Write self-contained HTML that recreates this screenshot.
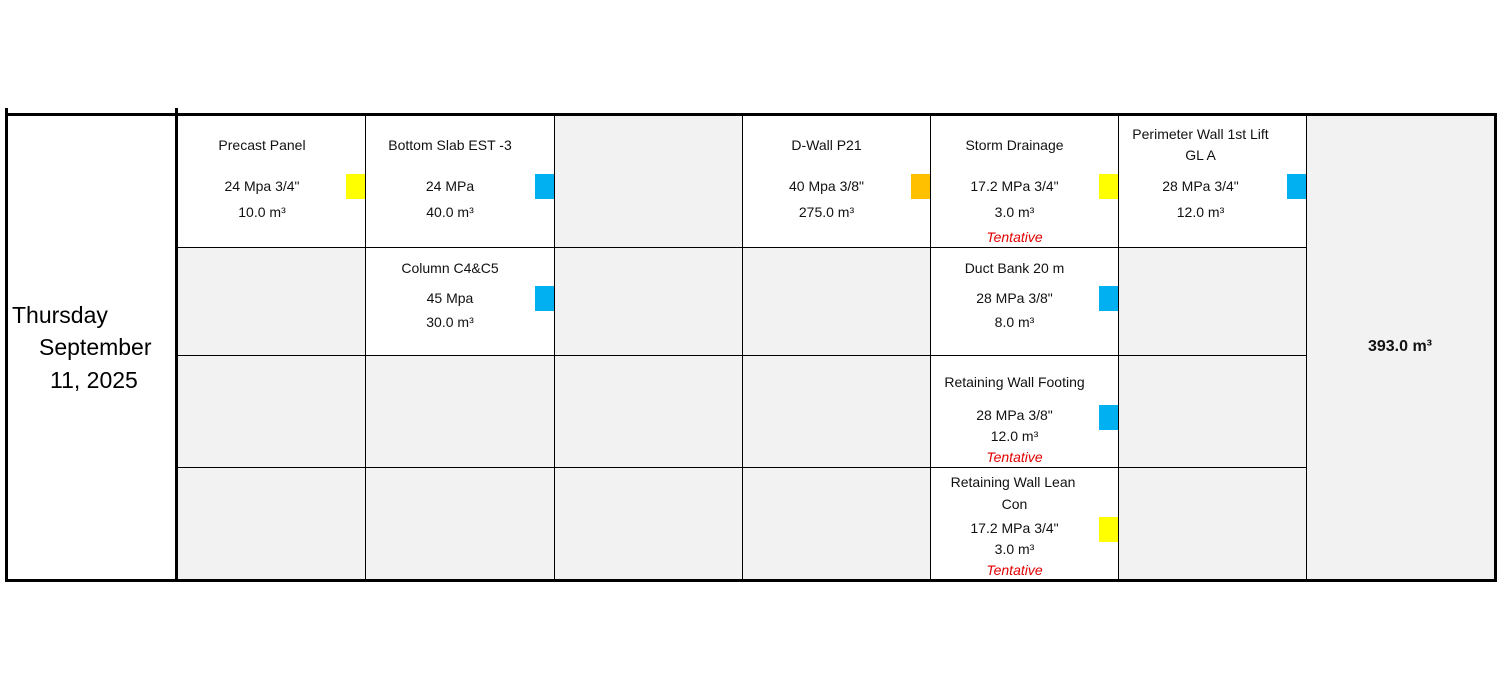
<!DOCTYPE html>
<html><head><style>
body{margin:0;width:1500px;height:700px;background:#fff;position:relative;font-family:"Liberation Sans",sans-serif;overflow:hidden}
.a{position:absolute}
.t{position:absolute;text-align:center;font-size:14px;line-height:16px;color:#111;white-space:nowrap}
.r{color:#e00000;font-style:italic}
.sq{position:absolute;width:19px;height:25px}
</style></head><body>
<div class="a" style="left:177px;top:116px;width:1318px;height:464px;background:#f2f2f2"></div>
<div class="a" style="left:8px;top:116px;width:169px;height:464px;background:#fff"></div>
<div class="a" style="left:177px;top:116px;width:377px;height:131px;background:#fff"></div>
<div class="a" style="left:742px;top:116px;width:564px;height:131px;background:#fff"></div>
<div class="a" style="left:365px;top:247px;width:189px;height:108px;background:#fff"></div>
<div class="a" style="left:930px;top:247px;width:188px;height:333px;background:#fff"></div>
<div class="a" style="left:365px;top:116px;width:1px;height:464px;background:#000"></div>
<div class="a" style="left:554px;top:116px;width:1px;height:464px;background:#000"></div>
<div class="a" style="left:742px;top:116px;width:1px;height:464px;background:#000"></div>
<div class="a" style="left:930px;top:116px;width:1px;height:464px;background:#000"></div>
<div class="a" style="left:1118px;top:116px;width:1px;height:464px;background:#000"></div>
<div class="a" style="left:1306px;top:116px;width:1px;height:464px;background:#000"></div>
<div class="a" style="left:177px;top:247px;width:1129px;height:1px;background:#000"></div>
<div class="a" style="left:177px;top:355px;width:1129px;height:1px;background:#000"></div>
<div class="a" style="left:177px;top:467px;width:1129px;height:1px;background:#000"></div>
<div class="a" style="left:5px;top:113px;width:1492px;height:3px;background:#000"></div>
<div class="a" style="left:5px;top:579px;width:1492px;height:3px;background:#000"></div>
<div class="a" style="left:5px;top:108px;width:3px;height:474px;background:#000"></div>
<div class="a" style="left:175px;top:108px;width:3px;height:474px;background:#000"></div>
<div class="a" style="left:1494px;top:113px;width:3px;height:469px;background:#000"></div>
<div class="a" style="left:12px;top:302px;font-size:23px;line-height:26px">Thursday</div>
<div class="a" style="left:39px;top:334px;font-size:23px;line-height:26px">September</div>
<div class="a" style="left:50px;top:367px;font-size:23px;line-height:26px">11, 2025</div>
<div class="sq" style="left:346px;top:174px;background:#ffff00"></div>
<div class="sq" style="left:535px;top:174px;background:#00b0f0"></div>
<div class="sq" style="left:911px;top:174px;background:#ffc000"></div>
<div class="sq" style="left:1099px;top:174px;background:#ffff00"></div>
<div class="sq" style="left:1287px;top:174px;background:#00b0f0"></div>
<div class="sq" style="left:535px;top:286px;background:#00b0f0"></div>
<div class="sq" style="left:1099px;top:286px;background:#00b0f0"></div>
<div class="sq" style="left:1099px;top:405px;background:#00b0f0"></div>
<div class="sq" style="left:1099px;top:517px;background:#ffff00"></div>
<div class="t" style="left:177px;width:170px;top:137px">Precast Panel</div>
<div class="t" style="left:177px;width:170px;top:178px">24 Mpa 3/4"</div>
<div class="t" style="left:177px;width:170px;top:204px">10.0 m³</div>
<div class="t" style="left:365px;width:170px;top:137px">Bottom Slab EST -3</div>
<div class="t" style="left:365px;width:170px;top:178px">24 MPa</div>
<div class="t" style="left:365px;width:170px;top:204px">40.0 m³</div>
<div class="t" style="left:742px;width:169px;top:137px">D-Wall P21</div>
<div class="t" style="left:742px;width:169px;top:178px">40 Mpa 3/8"</div>
<div class="t" style="left:742px;width:169px;top:204px">275.0 m³</div>
<div class="t" style="left:930px;width:169px;top:137px">Storm Drainage</div>
<div class="t" style="left:930px;width:169px;top:178px">17.2 MPa 3/4"</div>
<div class="t" style="left:930px;width:169px;top:204px">3.0 m³</div>
<div class="t r" style="left:930px;width:169px;top:229px">Tentative</div>
<div class="t" style="left:1118px;width:165px;top:126px">Perimeter Wall 1st Lift</div>
<div class="t" style="left:1118px;width:165px;top:147px">GL A</div>
<div class="t" style="left:1118px;width:165px;top:178px">28 MPa 3/4"</div>
<div class="t" style="left:1118px;width:165px;top:204px">12.0 m³</div>
<div class="t" style="left:365px;width:170px;top:260px">Column C4&amp;C5</div>
<div class="t" style="left:365px;width:170px;top:290px">45 Mpa</div>
<div class="t" style="left:365px;width:170px;top:314px">30.0 m³</div>
<div class="t" style="left:930px;width:169px;top:260px">Duct Bank 20 m</div>
<div class="t" style="left:930px;width:169px;top:290px">28 MPa 3/8"</div>
<div class="t" style="left:930px;width:169px;top:314px">8.0 m³</div>
<div class="t" style="left:930px;width:169px;top:374px">Retaining Wall Footing</div>
<div class="t" style="left:930px;width:169px;top:407px">28 MPa 3/8"</div>
<div class="t" style="left:930px;width:169px;top:428px">12.0 m³</div>
<div class="t r" style="left:930px;width:169px;top:449px">Tentative</div>
<div class="t" style="left:930px;width:166px;top:474px">Retaining Wall Lean</div>
<div class="t" style="left:930px;width:169px;top:496px">Con</div>
<div class="t" style="left:930px;width:169px;top:520px">17.2 MPa 3/4"</div>
<div class="t" style="left:930px;width:169px;top:541px">3.0 m³</div>
<div class="t r" style="left:930px;width:169px;top:562px">Tentative</div>
<div class="t" style="left:1306px;width:188px;top:338px;font-weight:bold;font-size:16px;line-height:18px">393.0 m³</div>
</body></html>
